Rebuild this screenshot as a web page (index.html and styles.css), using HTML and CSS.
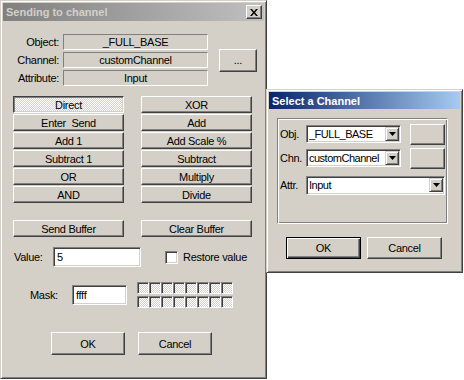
FILE: index.html
```html
<!DOCTYPE html>
<html lang="en">
<head>
    <meta charset="UTF-8">
    <title>Sending to channel</title>
    <link rel="stylesheet" href="styles.css">
</head>
<body>
    <div class="win win-send">
        <div class="titlebar inactive">
            <span class="title">Sending to channel</span>
            <span class="close">
                <svg width="8" height="7" viewBox="0 0 8 7"><path d="M0 0h2l2 2.5 2-2.5h2l-3 3.5 3 3.5h-2l-2-2.5-2 2.5h-2l3-3.5z" fill="#000"/></svg>
            </span>
        </div>
        <div class="send-body">
            <div class="src">
                <div class="src-grid">
                    <span class="lbl">Object:</span><div class="static">_FULL_BASE</div>
                    <span class="lbl">Channel:</span><div class="static">customChannel</div>
                    <span class="lbl">Attribute:</span><div class="static">Input</div>
                </div>
                <button class="btn dots">...</button>
            </div>

            <div class="ops">
                <button class="btn pressed">Direct</button>
                <button class="btn">XOR</button>
                <button class="btn">Enter&nbsp; Send</button>
                <button class="btn">Add</button>
                <button class="btn">Add 1</button>
                <button class="btn">Add Scale %</button>
                <button class="btn">Subtract 1</button>
                <button class="btn">Subtract</button>
                <button class="btn">OR</button>
                <button class="btn">Multiply</button>
                <button class="btn">AND</button>
                <button class="btn">Divide</button>
            </div>

            <div class="ops buffer">
                <button class="btn">Send Buffer</button>
                <button class="btn">Clear Buffer</button>
            </div>

            <div class="value-row">
                <span class="lbl-left">Value:</span>
                <div class="edit value-edit">5</div>
                <span class="checkbox"></span>
                <span class="check-text">Restore value</span>
            </div>

            <div class="mask-row">
                <span class="lbl-left">Mask:</span>
                <div class="edit mask-edit">ffff</div>
                <div class="bits">
                    <span></span><span></span><span></span><span></span><span></span><span></span><span></span><span></span>
                    <span></span><span></span><span></span><span></span><span></span><span></span><span></span><span></span>
                </div>
            </div>

            <div class="actions">
                <button class="btn big">OK</button>
                <button class="btn big">Cancel</button>
            </div>
        </div>
    </div>

    <div class="win win-select">
        <div class="titlebar active">
            <span class="title">Select a Channel</span>
        </div>
        <div class="select-body">
            <div class="group">
                <div class="sel-row">
                    <span class="lbl-short">Obj.</span>
                    <div class="combo small"><span class="combo-text">_FULL_BASE</span><span class="drop"><svg width="7" height="4" viewBox="0 0 7 4"><path d="M0 0h7l-3.5 4z" fill="#000"/></svg></span></div>
                    <button class="btn blank"></button>
                </div>
                <div class="sel-row">
                    <span class="lbl-short">Chn.</span>
                    <div class="combo small"><span class="combo-text">customChannel</span><span class="drop"><svg width="7" height="4" viewBox="0 0 7 4"><path d="M0 0h7l-3.5 4z" fill="#000"/></svg></span></div>
                    <button class="btn blank"></button>
                </div>
                <div class="sel-row attr">
                    <span class="lbl-short">Attr.</span>
                    <div class="combo wide"><span class="combo-text">Input</span><span class="drop"><svg width="7" height="4" viewBox="0 0 7 4"><path d="M0 0h7l-3.5 4z" fill="#000"/></svg></span></div>
                </div>
            </div>
            <div class="sel-actions">
                <button class="btn big default">OK</button>
                <button class="btn big">Cancel</button>
            </div>
        </div>
    </div>
</body>
</html>
```

FILE: styles.css
```css
html, body {
    margin: 0;
    padding: 0;
}
body {
    width: 464px;
    height: 380px;
    overflow: hidden;
    position: relative;
    background-color: #fff;
    font-family: "Liberation Sans", Arial, sans-serif;
    font-size: 11px;
    letter-spacing: -0.3px;
    color: #000;
}
button {
    font-family: inherit;
    font-size: 11px;
    letter-spacing: -0.3px;
    color: #000;
    margin: 0;
    padding: 0;
}

/* window frames */
.win {
    position: absolute;
    box-sizing: border-box;
    background-color: #d4d0c8;
    border: 1px solid;
    border-color: #d4d0c8 #404040 #404040 #d4d0c8;
    box-shadow: inset 1px 1px #fff, inset -1px -1px #808080;
    padding: 2px;
}
.win-send {
    left: 0;
    top: 0;
    width: 267px;
    height: 379px;
}
.win-select {
    left: 266px;
    top: 89px;
    width: 197px;
    height: 184px;
}
.titlebar {
    height: 18px;
    display: flex;
    align-items: center;
    justify-content: space-between;
    padding: 0 2px 0 3px;
}
.titlebar .title {
    font-weight: bold;
    font-size: 11px;
    letter-spacing: 0;
}
.inactive {
    background: linear-gradient(to right, #808080, #c0c0c0);
    color: #d4d0c8;
}
.active {
    height: 17px;
    background: linear-gradient(to right, #0a246a, #a6caf0);
    color: #fff;
}
.close {
    box-sizing: border-box;
    width: 16px;
    height: 14px;
    display: flex;
    align-items: center;
    justify-content: center;
    background-color: #d4d0c8;
    border: 1px solid;
    border-color: #fff #404040 #404040 #fff;
    box-shadow: inset -1px -1px #808080;
}

/* 3d controls */
.btn {
    box-sizing: border-box;
    background-color: #d4d0c8;
    border: 1px solid;
    border-color: #fff #404040 #404040 #fff;
    box-shadow: inset -1px -1px #808080, inset 1px 1px #d4d0c8;
    text-align: center;
    cursor: default;
}
.btn.pressed {
    border-color: #404040 #fff #fff #404040;
    box-shadow: inset 1px 1px #808080, inset -1px -1px #d4d0c8;
    background: repeating-conic-gradient(#fff 0 25%, #d4d0c8 0 50%) 0 0 / 2px 2px;
}
.btn.default {
    border: 1px solid #000;
    box-shadow: inset 1px 1px #fff, inset -1px -1px #404040, inset -2px -2px #808080;
}
.edit {
    box-sizing: border-box;
    background-color: #fff;
    border: 1px solid;
    border-color: #808080 #fff #fff #808080;
    box-shadow: inset 1px 1px #404040, inset -1px -1px #d4d0c8;
    padding: 0 3px;
    display: flex;
    align-items: center;
}
.static {
    box-sizing: border-box;
    height: 16px;
    border: 1px solid;
    border-color: #808080 #fff #fff #808080;
    text-align: center;
    line-height: 14px;
}

/* sending dialog */
.send-body {
    padding-left: 5px;
}
.src {
    display: flex;
    align-items: center;
    margin-top: 13px;
}
.src-grid {
    display: grid;
    grid-template-columns: 51px 145px;
    grid-auto-rows: 16px;
    column-gap: 4px;
    row-gap: 2px;
}
.lbl {
    text-align: right;
    line-height: 16px;
}
.dots {
    width: 38px;
    height: 23px;
    margin-left: 11px;
}
.ops {
    display: grid;
    grid-template-columns: 111px 111px;
    grid-auto-rows: 17px;
    column-gap: 17px;
    row-gap: 1px;
    margin: 10px 0 0 5px;
}
.ops.buffer {
    margin-top: 17px;
}
.value-row {
    display: flex;
    align-items: center;
    margin-top: 10px;
    height: 20px;
}
.lbl-left {
    display: inline-block;
}
.value-row .lbl-left {
    margin-left: 6px;
    width: 39px;
}
.value-edit {
    width: 88px;
    height: 20px;
}
.checkbox {
    box-sizing: border-box;
    width: 13px;
    height: 13px;
    margin-left: 24px;
    background-color: #fff;
    border: 1px solid;
    border-color: #808080 #fff #fff #808080;
    box-shadow: inset 1px 1px #404040, inset -1px -1px #d4d0c8;
}
.check-text {
    margin-left: 5px;
}
.mask-row {
    display: flex;
    align-items: center;
    margin-top: 15px;
    height: 25px;
}
.mask-row .lbl-left {
    margin-left: 22px;
    width: 42px;
}
.mask-edit {
    width: 55px;
    height: 20px;
}
.bits {
    display: grid;
    grid-template-columns: repeat(8, 12px);
    grid-auto-rows: 12px;
    row-gap: 2px;
    margin-left: 10px;
}
.bits span {
    box-sizing: border-box;
    border: 1px solid;
    border-color: #808080 #fff #fff #808080;
    box-shadow: inset 1px 1px #404040;
    background: repeating-conic-gradient(#fff 0 25%, #d4d0c8 0 50%) 0 0 / 2px 2px;
}
.actions {
    display: flex;
    gap: 13px;
    margin: 25px 0 0 43px;
}
.big {
    width: 74px;
    height: 23px;
}

/* select dialog */
.select-body {
    padding: 9px 0 0 8px;
}
.group {
    box-sizing: border-box;
    width: 171px;
    height: 106px;
    border: 1px solid;
    border-color: #808080 #fff #fff #808080;
    box-shadow: inset 1px 1px #fff, inset -1px -1px #808080;
    padding: 4px 0 0 2px;
}
.sel-row {
    display: flex;
    align-items: center;
    height: 22px;
    margin-bottom: 2px;
}
.sel-row.attr {
    margin-top: 5px;
}
.lbl-short {
    width: 26px;
}
.combo {
    box-sizing: border-box;
    height: 18px;
    background-color: #fff;
    border: 1px solid;
    border-color: #808080 #fff #fff #808080;
    box-shadow: inset 1px 1px #404040, inset -1px -1px #d4d0c8;
    display: flex;
    align-items: center;
    padding: 0 1px 0 2px;
}
.combo-text {
    flex: 1;
    overflow: hidden;
    white-space: nowrap;
    letter-spacing: -0.5px;
}
.combo.small {
    width: 95px;
}
.combo.wide {
    width: 139px;
    height: 19px;
}
.drop {
    box-sizing: border-box;
    flex: none;
    width: 14px;
    height: 14px;
    display: flex;
    align-items: center;
    justify-content: center;
    background-color: #d4d0c8;
    border: 1px solid;
    border-color: #d4d0c8 #404040 #404040 #d4d0c8;
    box-shadow: inset 1px 1px #fff, inset -1px -1px #808080;
}
.blank {
    width: 35px;
    height: 21px;
    margin-left: 9px;
}
.sel-actions {
    display: flex;
    gap: 6px;
    margin: 13px 0 0 9px;
}
.sel-actions .big {
    width: 75px;
    height: 22px;
}
```
